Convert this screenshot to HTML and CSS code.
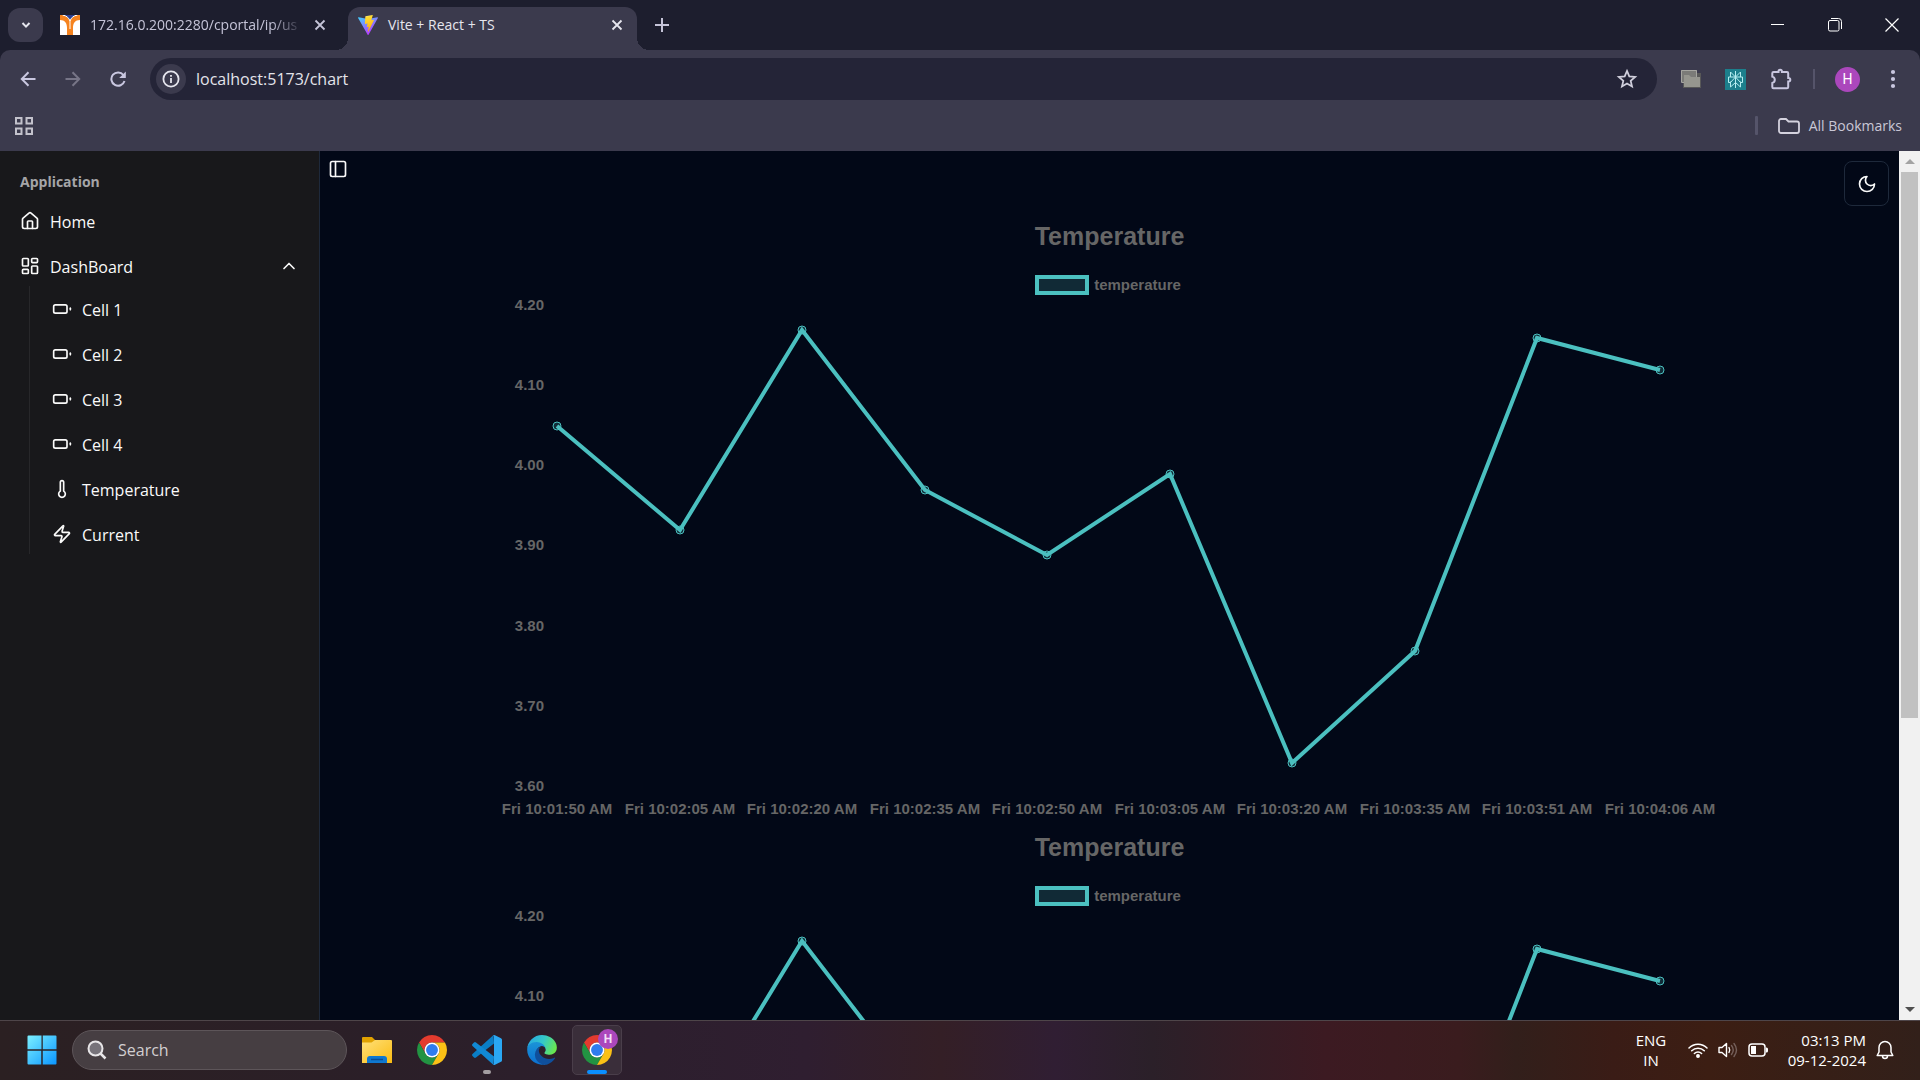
FILE: index.html
```html
<!DOCTYPE html>
<html lang="en">
<head>
<meta charset="utf-8">
<meta name="viewport" content="width=device-width, initial-scale=1">
<title>Vite + React + TS</title>
<link rel="stylesheet" href="styles.css">
</head>
<body>
<header class="browser">
  <div class="tabstrip">
    <button class="tab-search" aria-label="Search tabs"><svg width="12" height="12" viewBox="0 0 12 12"><path d="M2.500 4l3.500 3.600L9.500 4" fill="none" stroke="#e6e6ee" stroke-width="2"/></svg></button>
    <div class="tab">
      <svg class="favicon" viewBox="0 0 20 20"><path fill="#fff" d="M0 0h20v20H0z"/><path fill="#2a3f8f" d="M4 0h12l-5 5H9z"/><path fill="#f5831f" d="M0 0c5 0 8 2 10 6 2-4 5-6 10-6v5c-5 0-7 3-7 8v7H7v-7c0-5-2-8-7-8z"/><path stroke="#fff" stroke-width="1" fill="none" d="M3 0c4 1 6 3 7 6v8M17 0c-4 1-6 3-7 6"/></svg>
      <span class="tab-title faded">172.16.0.200:2280/cportal/ip/us</span>
      <button class="tab-close" aria-label="Close tab"><svg width="12" height="12" viewBox="0 0 12 12"><path d="M1.500 1.500l9 9M10.500 1.500l-9 9" stroke="currentColor" stroke-width="1.800"/></svg></button>
    </div>
    <div class="tab active">
      <svg class="favicon" viewBox="0 0 256 257"><defs><linearGradient id="va" x1="0" y1="0" x2=".6" y2="1"><stop offset="0" stop-color="#41d1ff"/><stop offset="1" stop-color="#bd34fe"/></linearGradient><linearGradient id="vb" x1=".4" y1="0" x2=".6" y2="1"><stop offset="0" stop-color="#ffea83"/><stop offset=".1" stop-color="#ffdd35"/><stop offset="1" stop-color="#ffa800"/></linearGradient></defs><path fill="url(#va)" d="M255.153 37.938L134.897 252.976c-2.483 4.440-8.862 4.466-11.382.048L.875 37.958c-2.746-4.814 1.371-10.646 6.827-9.670l120.385 21.517a6.537 6.537 0 0 0 2.322-.004l117.867-21.483c5.438-.991 9.574 4.796 6.877 9.620Z"/><path fill="url(#vb)" d="M185.432.063L96.440 17.501a3.268 3.268 0 0 0-2.634 3.014l-5.474 92.456a3.268 3.268 0 0 0 3.997 3.378l24.777-5.718c2.318-.535 4.413 1.507 3.936 3.838l-7.361 36.047c-.495 2.426 1.782 4.500 4.151 3.780l15.304-4.649c2.372-.720 4.652 1.360 4.150 3.788l-11.698 56.621c-.732 3.542 3.979 5.473 5.943 2.437l1.313-2.028l72.516-144.720c1.215-2.423-.880-5.186-3.540-4.672l-25.505 4.922c-2.396.462-4.435-1.770-3.759-4.114l16.646-57.705c.677-2.350-1.370-4.583-3.769-4.113Z"/></svg>
      <span class="tab-title">Vite + React + TS</span>
      <button class="tab-close" aria-label="Close tab"><svg width="12" height="12" viewBox="0 0 12 12"><path d="M1.500 1.500l9 9M10.500 1.500l-9 9" stroke="currentColor" stroke-width="1.800"/></svg></button>
    </div>
    <button class="new-tab" aria-label="New tab"><svg width="14" height="14" viewBox="0 0 14 14"><path d="M7 0v14M0 7h14" stroke="currentColor" stroke-width="2"/></svg></button>
    <div class="window-controls">
      <button aria-label="Minimize"><svg width="14" height="14" viewBox="0 0 14 14"><path d="M0 6.500h13" stroke="#fff"/></svg></button>
      <button aria-label="Restore"><svg width="14" height="14" viewBox="0 0 14 14" fill="none" stroke="#fff"><rect x=".5" y="2.500" width="10.500" height="10.500" rx="1.500"/><path d="M3 .5h7.500a3 3 0 0 1 3 3V11"/></svg></button>
      <button aria-label="Close"><svg width="14" height="14" viewBox="0 0 14 14"><path d="M.5.5l13 13M13.500.5l-13 13" stroke="#fff" stroke-width="1.200"/></svg></button>
    </div>
  </div>
  <div class="toolbar">
    <nav class="nav-buttons" aria-label="History">
      <button aria-label="Back"><svg width="16" height="16" viewBox="0 0 16 16" fill="none" stroke="#c9c7e0" stroke-width="2"><path d="M15.500 8H2M8.500 1.300L1.800 8l6.700 6.700"/></svg></button>
      <button aria-label="Forward"><svg width="16" height="16" viewBox="0 0 16 16" fill="none" stroke="#777587" stroke-width="2"><path d="M.5 8H14M7.500 1.300L14.200 8l-6.700 6.700"/></svg></button>
      <button aria-label="Reload"><svg width="16" height="16" viewBox="0 0 16 16"><path d="M14.500 10A6.700 6.700 0 1 1 13.400 4" fill="none" stroke="#c9c7e0" stroke-width="2"/><path d="M15.800.4V7H9.200z" fill="#c9c7e0"/></svg></button>
    </nav>
    <div class="omnibox">
      <button class="site-info" aria-label="View site information"><svg width="18" height="18" viewBox="0 0 18 18"><circle cx="9" cy="9" r="7.600" fill="none" stroke="#e6e6ee" stroke-width="1.800"/><path d="M9 8v5M9 5v1.800" stroke="#e6e6ee" stroke-width="1.800"/></svg></button>
      <input class="url" type="text" aria-label="Address" value="localhost:5173/chart">
      <button class="star" aria-label="Bookmark this tab"><svg width="22" height="22" viewBox="0 0 24 24" fill="none" stroke="#d0cfdc" stroke-width="1.900" stroke-linejoin="miter"><path d="M12 3.200l2.500 6 6.400.5-4.900 4.200 1.500 6.300L12 16.900l-5.500 3.300L8 13.900 3.100 9.700l6.400-.5z"/></svg></button>
    </div>
    <div class="extensions">
      <button aria-label="Tab manager"><svg width="20" height="18" viewBox="0 0 20 18"><path fill="#585858" d="M2 3h18v15H2z"/><path fill="#7b7b78" d="M0 0h16v12H0z"/><path fill="none" stroke="#a5a5a0" d="M.5.5h15v12H.5z"/><path fill="#96968f" d="M3 5h5l2 2h9v10H3z"/></svg></button>
      <button aria-label="Perplexity"><svg width="21" height="21" viewBox="0 0 21 21"><path fill="#1c7f8c" d="M0 0h21v21H0z"/><path fill="none" stroke="#b5edf0" d="M10.500 2v17M5.500 3l5 5 5-5v5M5.500 3v5H3.500v5.500h2l5-5.500 5 5.500h2V8h-12M5.500 12.500V18l5-4.500 5 4.500v-5.500"/></svg></button>
      <button aria-label="Extensions"><svg width="24" height="24" viewBox="0 0 24 24" fill="none" stroke="#c9c7e0" stroke-width="2"><path d="M4.500 5H9.500V4.500a1.700 1.700 0 0 1 3.400 0V5h5.100a1.200 1.200 0 0 1 1.200 1.200V11h.4a1.700 1.700 0 0 1 0 3.400h-.4V20a1.200 1.200 0 0 1-1.200 1.200H4.500a1.200 1.200 0 0 1-1.200-1.200v-4a3.300 3.300 0 0 0 0-6.400V6.200A1.200 1.200 0 0 1 4.500 5z"/></svg></button>
      <span class="divider"></span>
      <button aria-label="Profile"><span class="avatar">H</span></button>
      <button aria-label="Menu"><svg width="6" height="20" viewBox="0 0 6 20" fill="#c9c7e0"><circle cx="3" cy="3" r="2.100"/><circle cx="3" cy="10" r="2.100"/><circle cx="3" cy="17" r="2.100"/></svg></button>
    </div>
  </div>
  <div class="bookmarks">
    <button class="apps" aria-label="Apps"><svg width="18" height="18" viewBox="0 0 18 18" fill="none" stroke="#c3c2cc" stroke-width="2"><path d="M1 1h5.500v5.500H1zM11.500 1H17v5.500h-5.500zM1 11.500h5.500V17H1zM11.500 11.500H17V17h-5.500z"/></svg></button>
    <span class="bm-divider"></span>
    <button class="all-bookmarks"><svg width="22" height="16" viewBox="0 0 22 16" fill="none" stroke="#d4d2de" stroke-width="1.800"><path d="M1 3a2 2 0 0 1 2-2h5l2.500 2.500H19a2 2 0 0 1 2 2V13a2 2 0 0 1-2 2H3a2 2 0 0 1-2-2z"/></svg>All Bookmarks</button>
  </div>
</header>

<div class="page">
  <aside class="sidebar">
    <div class="group-label">Application</div>
    <ul class="menu">
      <li><a class="item" href="#home"><svg class="icon" viewBox="0 0 24 24"><path d="M15 21v-8a1 1 0 0 0-1-1h-4a1 1 0 0 0-1 1v8"/><path d="M3 10a2 2 0 0 1 .709-1.528l7-5.999a2 2 0 0 1 2.582 0l7 5.999A2 2 0 0 1 21 10v9a2 2 0 0 1-2 2H5a2 2 0 0 1-2-2z"/></svg><span>Home</span></a></li>
      <li>
        <button class="item"><svg class="icon" viewBox="0 0 24 24"><rect width="7" height="9" x="3" y="3" rx="1"/><rect width="7" height="5" x="14" y="3" rx="1"/><rect width="7" height="9" x="14" y="12" rx="1"/><rect width="7" height="5" x="3" y="16" rx="1"/></svg><span>DashBoard</span><svg class="icon chevron" viewBox="0 0 24 24"><path d="m18 15-6-6-6 6"/></svg></button>
        <ul class="submenu">
          <li><a class="item" href="#cell1"><svg class="icon" viewBox="0 0 24 24"><rect width="16" height="10" x="2" y="7" rx="2"/><path d="M22 11v2"/></svg><span>Cell 1</span></a></li>
          <li><a class="item" href="#cell2"><svg class="icon" viewBox="0 0 24 24"><rect width="16" height="10" x="2" y="7" rx="2"/><path d="M22 11v2"/></svg><span>Cell 2</span></a></li>
          <li><a class="item" href="#cell3"><svg class="icon" viewBox="0 0 24 24"><rect width="16" height="10" x="2" y="7" rx="2"/><path d="M22 11v2"/></svg><span>Cell 3</span></a></li>
          <li><a class="item" href="#cell4"><svg class="icon" viewBox="0 0 24 24"><rect width="16" height="10" x="2" y="7" rx="2"/><path d="M22 11v2"/></svg><span>Cell 4</span></a></li>
          <li><a class="item" href="#temperature"><svg class="icon" viewBox="0 0 24 24"><path d="M14 4v10.540a4 4 0 1 1-4 0V4a2 2 0 0 1 4 0Z"/></svg><span>Temperature</span></a></li>
          <li><a class="item" href="#current"><svg class="icon" viewBox="0 0 24 24"><path d="M4 14a1 1 0 0 1-.780-1.630l9.900-10.200a.5.5 0 0 1 .860.460l-1.920 6.020A1 1 0 0 0 13 10h7a1 1 0 0 1 .780 1.630l-9.900 10.200a.5.5 0 0 1-.860-.460l1.920-6.020A1 1 0 0 0 11 14z"/></svg><span>Current</span></a></li>
        </ul>
      </li>
    </ul>
  </aside>
  <main class="main">
    <div class="main-bar">
      <button class="sidebar-toggle" aria-label="Toggle sidebar"><svg class="icon" viewBox="0 0 24 24"><rect width="18" height="18" x="3" y="3" rx="2"/><path d="M9 3v18"/></svg></button>
      <button class="theme-toggle" aria-label="Toggle theme"><svg class="icon" viewBox="0 0 24 24"><path d="M12 3a6 6 0 0 0 9 9 9 9 0 1 1-9-9Z"/></svg></button>
    </div>
    <figure class="chart">
      <figcaption class="chart-title">Temperature</figcaption>
      <div class="legend"><span class="swatch"></span>temperature</div>
      <svg class="plot" viewBox="0 0 1222 524"></svg>
    </figure>
    <figure class="chart">
      <figcaption class="chart-title">Temperature</figcaption>
      <div class="legend"><span class="swatch"></span>temperature</div>
      <svg class="plot" viewBox="0 0 1222 524"></svg>
    </figure>
  </main>
  <div class="scrollbar"><span class="arrow up"></span><span class="track"><span class="thumb"></span></span><span class="arrow down"></span></div>
</div>

<footer class="taskbar">
  <button class="app" aria-label="Start"><svg width="30" height="30" viewBox="0 0 30 30"><defs><linearGradient id="win" x1="0" y1="0" x2="1" y2="1"><stop offset="0" stop-color="#7cf0ff"/><stop offset="1" stop-color="#0a95ff"/></linearGradient></defs><path fill="url(#win)" d="M1.500.5h13.500v14H.5V1.500a1 1 0 0 1 1-1zM15.500.5h13a1 1 0 0 1 1 1v13h-14zM.5 15.500h14v14h-13a1 1 0 0 1-1-1zM15.500 15.500h14v13a1 1 0 0 1-1 1h-13z"/><path stroke="#2a2226" d="M15 0v30M0 15h30"/></svg></button>
  <label class="search"><svg width="20" height="20" viewBox="0 0 20 20" fill="none" stroke="#e8e6e8" stroke-width="2"><circle cx="8.500" cy="8.500" r="7" fill="#77737a"/><path d="M13.500 13.500l5 5" stroke-width="2.500"/></svg><input type="text" placeholder="Search" aria-label="Search"></label>
  <button class="app" aria-label="File Explorer"><svg width="30" height="30" viewBox="0 0 30 30"><defs><linearGradient id="fo" x1="0" y1="0" x2="1" y2="1"><stop offset="0" stop-color="#ffe07a"/><stop offset="1" stop-color="#fbbc12"/></linearGradient></defs><path fill="#e0a100" d="M0 3a1 1 0 0 1 1-1h9l3 3v4H0z"/><path fill="url(#fo)" d="M0 7.500h9.500L13 5h16a1 1 0 0 1 1 1v22H0z"/><path fill="#0f78d0" d="M5 28v-4a3 3 0 0 1 3-3h14a3 3 0 0 1 3 3v4z"/><path stroke="#0a4d96" stroke-width="1.500" d="M9 24.500h12"/></svg></button>
  <button class="app" aria-label="Chrome"><svg width="30" height="30" viewBox="0 0 48 48"><path fill="#e33b2e" d="M24 12H44.780A24 24 0 0 0 3.220 12L13.610 30A12 12 0 0 1 24 12"/><path fill="#229342" d="M13.610 30L3.220 12A24 24 0 0 0 24 48L34.390 30A12 12 0 0 1 13.610 30"/><path fill="#fbc116" d="M34.390 30L24 48A24 24 0 0 0 44.780 12H24A12 12 0 0 1 34.390 30"/><circle cx="24" cy="24" r="12" fill="#fff"/><circle cx="24" cy="24" r="9.500" fill="#2f7cee"/></svg></button>
  <button class="app" aria-label="Visual Studio Code"><svg width="30" height="30" viewBox="0 0 30 30"><path fill="#0a7ec6" d="M21.500 0l.5 8.500L4 22.500a1.500 1.500 0 0 1-2 0L.5 21a1.500 1.500 0 0 1 0-2z"/><path fill="#1189d4" d="M21.500 30l.5-8.500L4 7.500a1.500 1.500 0 0 0-2 0L.5 9a1.500 1.500 0 0 0 0 2z"/><path fill="#2aa7f3" d="M21 0.500q.8-.8 2-.2l6 2.900q1 .5 1 1.500v20.600q0 1-1 1.500l-6 2.900q-1.200.6-2-.2 1 0 1-1.500V2q0-1.500-1-1.500z"/></svg><span class="indicator"></span></button>
  <button class="app" aria-label="Edge"><svg width="30" height="30" viewBox="0 0 256 259"><defs><linearGradient id="eg" x1="0" y1=".3" x2="1" y2=".6"><stop offset="0" stop-color="#27a9e3"/><stop offset=".5" stop-color="#35c8c8"/><stop offset="1" stop-color="#6be84a"/></linearGradient><linearGradient id="eb" x1=".5" y1="0" x2=".5" y2="1"><stop offset="0" stop-color="#1c96d8"/><stop offset="1" stop-color="#0b6fd0"/></linearGradient></defs><path fill="#0f4f9c" d="M235.680 195.460a93.730 93.730 0 0 1-10.540 4.710 101.870 101.870 0 0 1-35.900 6.460c-47.320 0-88.540-32.550-88.540-74.320A31.480 31.480 0 0 1 117.130 105c-42.800 1.800-53.800 46.400-53.800 72.530 0 73.880 68.090 81.370 82.760 81.370 7.910 0 19.840-2.300 27-4.560l1.310-.44a128.340 128.340 0 0 0 66.600-52.800 4 4 0 0 0-5.320-5.640z"/><path fill="url(#eb)" d="M105.730 241.420A79.200 79.200 0 0 1 83 220.080a80.720 80.720 0 0 1 29.500-120.750c3.120-1.470 8.450-4.130 15.540-4a32.350 32.350 0 0 1 25.690 13 31.880 31.880 0 0 1 6.360 18.660c0-.21 24.460-79.600-80-79.600-43.900 0-80 41.660-80 78.210a130.150 130.150 0 0 0 12.110 56 128 128 0 0 0 156.380 67.110 75.550 75.550 0 0 1-62.780-8z"/><path fill="url(#eg)" d="M152.330 148.860c-.81 1.050-3.300 2.500-3.300 5.660 0 2.610 1.700 5.120 4.720 7.230 14.380 10 41.490 8.680 41.560 8.680a59.560 59.560 0 0 0 30.270-8.350 61.380 61.380 0 0 0 30.430-52.880c.26-22.410-8-37.310-11.340-43.910C223.480 23.840 177.720 0 128 0A128 128 0 0 0 0 126.200c.48-36.540 36.800-66.050 80-66.050 3.500 0 23.460.34 42 10.070 16.340 8.580 24.900 18.940 30.850 29.210 6.180 10.670 7.280 24.150 7.280 29.520s-2.740 13.330-7.800 19.910z"/></svg></button>
  <button class="app running" aria-label="Chrome profile H"><svg width="30" height="30" viewBox="0 0 48 48"><path fill="#e33b2e" d="M24 12H44.780A24 24 0 0 0 3.220 12L13.610 30A12 12 0 0 1 24 12"/><path fill="#229342" d="M13.610 30L3.220 12A24 24 0 0 0 24 48L34.390 30A12 12 0 0 1 13.610 30"/><path fill="#fbc116" d="M34.390 30L24 48A24 24 0 0 0 44.780 12H24A12 12 0 0 1 34.390 30"/><circle cx="24" cy="24" r="12" fill="#fff"/><circle cx="24" cy="24" r="9.500" fill="#2f7cee"/></svg><span class="badge">H</span><span class="indicator"></span></button>
  <div class="tray">
    <button class="lang"><span>ENG</span><span>IN</span></button>
    <button class="status" aria-label="Network, volume, battery">
      <svg width="20" height="16" viewBox="0 0 20 16" fill="none" stroke="#fff" stroke-width="1.500" stroke-linecap="round"><path d="M1 6a12.500 12.500 0 0 1 18 0M3.700 8.800a8.800 8.800 0 0 1 12.600 0M6.400 11.500a5 5 0 0 1 7.200 0"/><circle cx="10" cy="14" r="1.200" fill="#fff"/></svg>
      <svg width="20" height="16" viewBox="0 0 20 16" fill="none" stroke="#fff" stroke-width="1.400" stroke-linejoin="round" stroke-linecap="round"><path d="M1 5.500h3L8.500 1.500v13L4 10.500H1z"/><path d="M11 5.500q1.500 2.500 0 5"/><path stroke="#75605b" d="M13.500 3.500q3.500 4.500 0 9M16 1.500q5 6.500 0 13"/></svg>
      <svg width="20" height="14" viewBox="0 0 20 14" fill="none" stroke="#fff" stroke-width="1.500"><rect x="1" y="1" width="16" height="12" rx="3"/><path fill="#fff" stroke="none" d="M3 3h5v8H3zM18 4.500h.5a1.500 1.500 0 0 1 1.500 1.500v2a1.500 1.500 0 0 1-1.500 1.500H18z"/></svg>
    </button>
    <button class="clock"><span>03:13 PM</span><span>09-12-2024</span></button>
    <button class="bell" aria-label="Notifications"><svg width="18" height="20" viewBox="0 0 18 20" fill="none" stroke="#fff" stroke-width="1.500" stroke-linejoin="round"><path d="M9 1.500a6 6 0 0 0-6 6V12l-1.800 3.500h15.600L15 12V7.500a6 6 0 0 0-6-6zM6.500 16a2.500 2.500 0 0 0 5 0"/></svg></button>
  </div>
</footer>
<script src="chart.js"></script>
</body>
</html>
```
FILE: styles.css
```css
* { box-sizing: border-box; }

body {
  margin: 0;
  height: 100vh;
  display: flex;
  flex-direction: column;
  overflow: hidden;
  background: #1d1e2e;
  color: #fafafa;
  font: 16px/20px "Open Sans", "Noto Sans", sans-serif;
}

button {
  display: flex;
  align-items: center;
  justify-content: center;
  padding: 0;
  border: 0;
  background: none;
  color: inherit;
  font: inherit;
}

input {
  padding: 0;
  border: 0;
  outline: 0;
  background: none;
  color: inherit;
  font: inherit;
}

ul { margin: 0; padding: 0; list-style: none; }
svg { display: block; flex: none; }

.icon {
  width: 20px;
  height: 20px;
  fill: none;
  stroke: currentColor;
  stroke-width: 2;
  stroke-linecap: round;
  stroke-linejoin: round;
}

/* Tab strip */
.browser { flex: none; font-size: 14px; }

.tabstrip {
  display: flex;
  height: 50px;
  padding-left: 8px;
  background: #1d1e2e;
}

.tab-search {
  width: 35px;
  height: 34px;
  margin-top: 8px;
  border-radius: 12px;
  background: #3b3a4d;
}

.tab {
  display: flex;
  align-items: center;
  width: 289px;
  height: 43px;
  margin-top: 7px;
  padding: 0 11px 8px 10px;
  color: #c5c4d8;
}

.tab-search + .tab { width: 297px; margin-left: 8px; padding-left: 9px; padding-right: 19px; }

.tab.active {
  position: relative;
  border-radius: 12px 12px 0 0;
  background: #3b3a4d;
  color: #e6e6ee;
}

.tab.active::before,
.tab.active::after {
  content: "";
  position: absolute;
  bottom: 0;
  width: 12px;
  height: 12px;
}
.tab.active::before { right: 100%; background: radial-gradient(circle at 0 0, transparent 12px, #3b3a4d 12px); }
.tab.active::after { left: 100%; background: radial-gradient(circle at 100% 0, transparent 12px, #3b3a4d 12px); }

.favicon { width: 20px; height: 20px; }

.tab-title {
  flex: 1;
  margin: 0 8px 0 10px;
  white-space: nowrap;
}
.faded { -webkit-mask-image: linear-gradient(90deg, #000 85%, transparent); mask-image: linear-gradient(90deg, #000 85%, transparent); }

.tab-close { width: 18px; height: 18px; }
.new-tab { width: 35px; height: 34px; margin: 8px 0 0 7px; color: #c5c4d8; }
.window-controls { display: flex; margin-left: auto; }
.window-controls button { width: 57px; height: 49px; }

/* Toolbar */
.toolbar {
  display: flex;
  align-items: center;
  height: 58px;
  padding: 0 10px;
  border-radius: 10px 10px 0 0;
  background: #3b3a4d;
}

.nav-buttons, .extensions { display: flex; align-items: center; gap: 10px; }
.nav-buttons button, .extensions button { width: 35px; height: 35px; }

.omnibox {
  display: flex;
  align-items: center;
  flex: 1;
  height: 42px;
  margin: 0 16px 0 15px;
  padding: 0 15px 0 6px;
  border-radius: 21px;
  background: #242437;
}

.site-info { width: 30px; height: 30px; border-radius: 50%; background: #3b3a4d; }
.url { flex: 1; min-width: 0; margin-left: 10px; color: #e3e3ea; font-size: 16px; line-height: 24px; }
.star { width: 30px; height: 30px; }
.divider { width: 2px; height: 20px; margin: 0 5px; background: #55546a; }

.avatar {
  width: 25px;
  height: 25px;
  border-radius: 50%;
  background: #ab47bc;
  color: #fff;
  font: 14px/25px Roboto, sans-serif;
  text-align: center;
}

.bookmarks {
  display: flex;
  align-items: center;
  height: 43px;
  padding: 0 18px 8px 15px;
  background: #3b3a4d;
  color: #c9c7d6;
}
.bm-divider { width: 3px; height: 19px; margin-left: auto; border-radius: 1px; background: #55546a; }
.all-bookmarks { gap: 9px; margin-left: 20px; }

/* Application */
.page { flex: 1; display: flex; min-height: 0; background: #020817; }

.sidebar {
  flex: none;
  width: 320px;
  padding: 10px;
  border-right: 1px solid #1e293b;
  background: #18181b;
}

.group-label { padding: 1px 10px 0; font-size: 14px; font-weight: 700; line-height: 39px; color: #a5a5a8; }
.menu > li + li { margin-top: 5px; }

.item {
  display: flex;
  align-items: center;
  justify-content: flex-start;
  gap: 10px;
  width: 100%;
  height: 40px;
  padding: 0 10px;
  color: #fafafa;
  text-decoration: none;
}
.item span { padding-top: 2px; }
.chevron { margin-left: auto; }

.submenu {
  display: flex;
  flex-direction: column;
  gap: 5px;
  margin: 0 0 0 19px;
  padding: 3px 0 0 12px;
  border-left: 1px solid #27272a;
}

.main { flex: 1; min-width: 0; overflow: hidden; }
.main-bar { display: flex; justify-content: space-between; height: 58px; padding-right: 10px; }
.sidebar-toggle { width: 35px; height: 35px; }
.theme-toggle { width: 45px; height: 45px; margin-top: 10px; border: 1px solid #1e293b; border-radius: 8px; }

.chart { max-width: 1222px; margin: 0 auto; color: #666; font-family: "Liberation Sans", Arial, sans-serif; font-weight: bold; }
.chart-title { font-size: 25px; line-height: 55px; text-align: center; }
.legend { display: flex; align-items: center; justify-content: center; gap: 5px; padding: 11px 3px 1px 0; font-size: 15px; line-height: 20px; }
.swatch { width: 54px; height: 20px; border: 4px solid #4bc0c0; background: #112a36; }
.plot { width: 100%; overflow: visible; }
.plot text { fill: #666; font-size: 15px; }
.x-tick { text-anchor: middle; }
.y-tick { text-anchor: end; }
.series { fill: none; stroke: #4bc0c0; stroke-width: 4; stroke-linejoin: miter; }
.point { fill: rgba(75, 192, 192, .2); stroke: #4bc0c0; stroke-width: 1; }

.scrollbar { display: flex; flex-direction: column; width: 21px; background: #f1f1f1; }
.arrow { display: flex; align-items: center; justify-content: center; height: 21px; }
.arrow::before { content: ""; border: 5px solid transparent; }
.arrow.up::before { border-top: 0; border-bottom-color: #a3a3a3; }
.arrow.down::before { border-bottom: 0; border-top-color: #505050; }
.track { flex: 1; padding: 0 2px; }
.thumb { display: block; height: 66%; background: #c1c1c1; }

/* Taskbar */
.taskbar {
  flex: none;
  display: flex;
  align-items: center;
  gap: 5px;
  height: 60px;
  padding: 0 0 1px 17px;
  border-top: 1px solid #4e4549;
  background: linear-gradient(90deg, #2b2022, #2b1f28 20%, #2d1f2e 34%, #2f1e30 42%, #341f26 49%, #301e33 55%, #2b2029 60%, #3c1a22 69%, #3a1c1e 76%, #321f1b 79%, #3a1c16 84%, #3c1e13 89%, #32201a);
}

.app { position: relative; width: 50px; height: 50px; border: 1px solid transparent; border-radius: 5px; }
.app.running { border-color: #4a3e4a; background: #3a2e3a; }

.search {
  display: flex;
  align-items: center;
  gap: 11px;
  width: 275px;
  height: 40px;
  padding: 0 14px;
  border: 1px solid #5d5559;
  border-radius: 20px;
  background: #463e42;
}
.search input { flex: 1; min-width: 0; }
.search input::placeholder { color: #d2cfd1; opacity: 1; }

.indicator { position: absolute; bottom: 0; left: 50%; width: 8px; height: 4px; margin-left: -4px; border-radius: 2px; background: #a39da1; }
.running .indicator { width: 20px; margin-left: -10px; background: #0a8fff; }

.badge {
  position: absolute;
  top: 3px;
  right: 3px;
  width: 20px;
  height: 20px;
  border-radius: 50%;
  background: #ab47bc;
  color: #f3dff6;
  font: bold 12px/20px Roboto, sans-serif;
}

.tray { display: flex; align-items: center; margin-left: auto; padding-right: 26px; color: #fff; font-size: 15px; }
.lang { flex-direction: column; width: 40px; }
.status { gap: 10px; margin-left: 17px; }
.clock { flex-direction: column; align-items: flex-end; width: 98px; }
.bell { margin-left: 10px; }
```
FILE: chart.js
```js
const readings = [
  ["10:01:50", 4.05], ["10:02:05", 3.92], ["10:02:20", 4.17], ["10:02:35", 3.97], ["10:02:50", 3.89],
  ["10:03:05", 3.99], ["10:03:20", 3.63], ["10:03:35", 3.77], ["10:03:51", 4.16], ["10:04:06", 4.12],
];
const left = 58, right = 1161, yTop = 10, yBottom = 491, max = 4.2, min = 3.6;
const x = i => Math.round(left + (right - left) * i / (readings.length - 1));
const y = v => Math.round(yTop + (yBottom - yTop) * (max - v) / (max - min));

function drawPlot(plot) {
  const bounds = plot.closest(".main").getBoundingClientRect();
  const plotTop = plot.getBoundingClientRect().top;
  const visible = py => plotTop + py < bounds.bottom;
  let out = "";
  for (let t = 0; t <= 6; t++) {
    const v = max - t / 10;
    if (visible(y(v))) out += `<text class="y-tick" x="45" y="${y(v) + 4}">${v.toFixed(2)}</text>`;
  }
  if (visible(518)) {
    readings.forEach(([time], i) => {
      out += `<text class="x-tick" x="${x(i)}" y="518">Fri ${time} AM</text>`;
    });
  }
  out += `<polyline class="series" points="${readings.map(([, v], i) => x(i) + "," + y(v)).join(" ")}"/>`;
  readings.forEach(([, v], i) => {
    out += `<circle class="point" cx="${x(i)}" cy="${y(v)}" r="4"/>`;
  });
  plot.innerHTML = out;
}
document.querySelectorAll(".plot").forEach(drawPlot);
```
